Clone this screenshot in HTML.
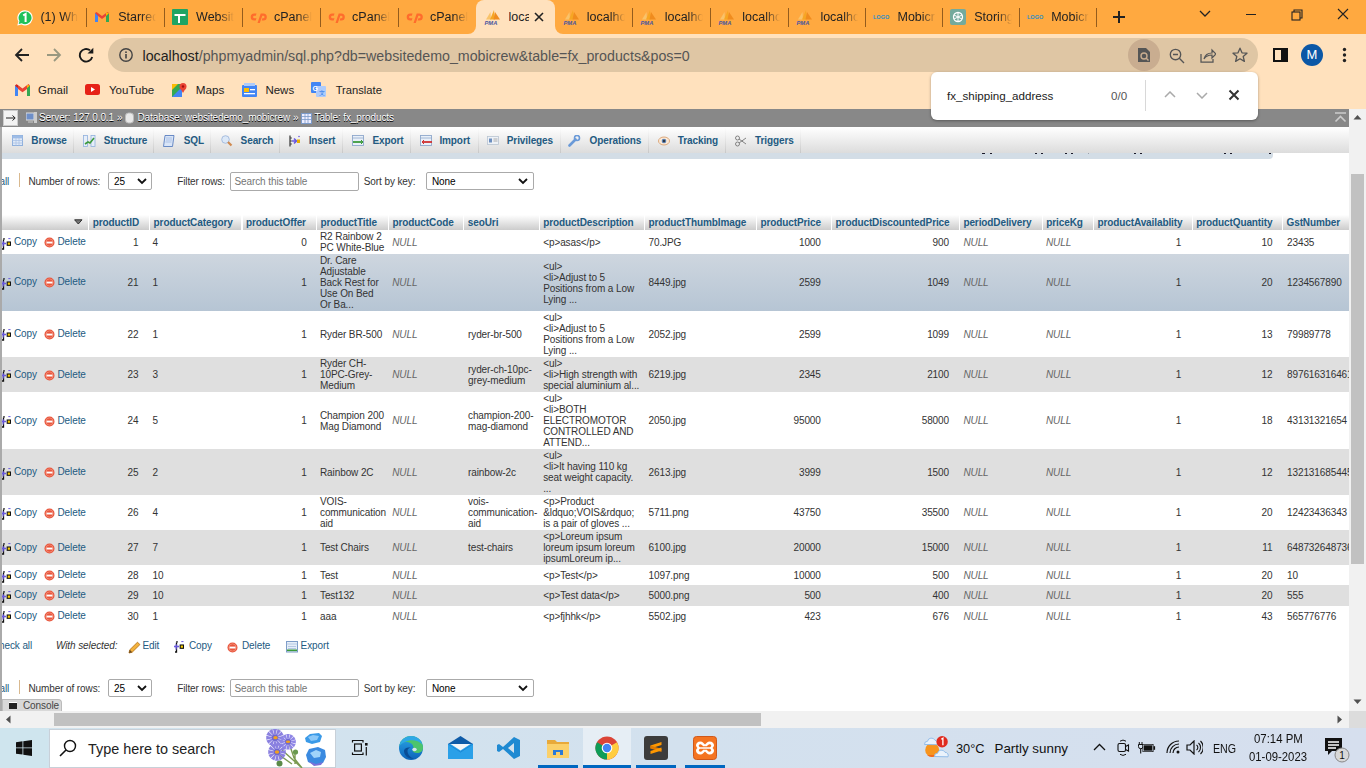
<!DOCTYPE html><html><head><meta charset="utf-8"><style>
*{box-sizing:border-box}
html,body{margin:0;padding:0;width:1366px;height:768px;overflow:hidden;background:#fff;font-family:"Liberation Sans",sans-serif}
.a{position:absolute;white-space:nowrap}
.t{position:absolute;white-space:nowrap;font-size:10px;letter-spacing:-0.1px;line-height:11px;color:#333}
.lnk{color:#235a81}
.nul{color:#666;font-style:italic}
.r{text-align:right}
</style></head><body>

<div class="a" style="left:0;top:0;width:1366px;height:34px;background:#ffa940"></div>
<div class="a" style="left:0;top:34px;width:1366px;height:75px;background:#ffe1bd"></div>
<div class="a" style="left:476px;top:0px;width:79px;height:38px;background:#ffe1bd;border-radius:8px 8px 0 0"></div>
<div class="a" style="left:468px;top:26px;width:8px;height:8px;background:#ffe1bd"></div>
<div class="a" style="left:468px;top:18px;width:8px;height:16px;background:#ffa940;border-radius:0 0 8px 0"></div>
<div class="a" style="left:555px;top:26px;width:8px;height:8px;background:#ffe1bd"></div>
<div class="a" style="left:555px;top:18px;width:8px;height:16px;background:#ffa940;border-radius:0 0 0 8px"></div>
<svg class="a" style="left:15.600000000000001px;top:8.5px" width="18" height="18" viewBox="0 0 18 18"><path d="M9 1.2a7.6 7.6 0 0 0-6.6 11.4L1.3 16.6l4.2-1.1A7.6 7.6 0 1 0 9 1.2z" fill="#fff"/><path d="M9 2.4a6.4 6.4 0 0 0-5.5 9.7l-.8 2.9 3-.8A6.4 6.4 0 1 0 9 2.4z" fill="#1fc15a"/><path d="M7.2 6.3L9.6 4.9V13" fill="none" stroke="#fff" stroke-width="2"/></svg>
<div class="a" style="left:40.4px;top:9px;width:38px;overflow:hidden;font-size:12.5px;line-height:16px;color:#222;-webkit-mask-image:linear-gradient(90deg,#000 62%,transparent 100%)">(1) Wha</div>
<svg class="a" style="left:93.9px;top:9px" width="16" height="16" viewBox="0 0 16 16"><path d="M1 4v9h3V7l4 3 4-3v6h3V4l-1.5-1L8 7 2.5 3z" fill="#ea4335"/><path d="M1 4v9h3V7z" fill="#4285f4"/><path d="M12 7v6h3V4z" fill="#34a853"/><path d="M15 4l-3 3V3.5z" fill="#fbbc04"/></svg>
<div class="a" style="left:118.2px;top:9px;width:38px;overflow:hidden;font-size:12.5px;line-height:16px;color:#222;-webkit-mask-image:linear-gradient(90deg,#000 62%,transparent 100%)">Starred</div>
<svg class="a" style="left:171.8px;top:9px" width="16" height="16" viewBox="0 0 16 16"><rect x="0" y="0" width="16" height="16" rx="1" fill="#1fa463"/><rect x="2.5" y="5" width="11" height="2" fill="#fff"/><rect x="6" y="5" width="2" height="9" fill="#fff"/></svg>
<div class="a" style="left:196.10000000000002px;top:9px;width:38px;overflow:hidden;font-size:12.5px;line-height:16px;color:#222;-webkit-mask-image:linear-gradient(90deg,#000 62%,transparent 100%)">Websit</div>
<svg class="a" style="left:249.7px;top:9px" width="17" height="16" viewBox="0 0 17 16"><path d="M6.5 4.5H4.2a3.5 3.5 0 0 0 0 7h1.5l.8-2.2H4.4a1.3 1.3 0 0 1 0-2.6h1.4z" fill="#ff6c2c"/><path d="M7.5 14l3.2-9.5h2.6a3.5 3.5 0 0 1 0 7h-1.6l.7-2.2h.8a1.3 1.3 0 0 0 0-2.6h-.9L9.8 14z" fill="#ff6c2c"/></svg>
<div class="a" style="left:274.0px;top:9px;width:38px;overflow:hidden;font-size:12.5px;line-height:16px;color:#222;-webkit-mask-image:linear-gradient(90deg,#000 62%,transparent 100%)">cPanel</div>
<svg class="a" style="left:327.8px;top:9px" width="17" height="16" viewBox="0 0 17 16"><path d="M6.5 4.5H4.2a3.5 3.5 0 0 0 0 7h1.5l.8-2.2H4.4a1.3 1.3 0 0 1 0-2.6h1.4z" fill="#ff6c2c"/><path d="M7.5 14l3.2-9.5h2.6a3.5 3.5 0 0 1 0 7h-1.6l.7-2.2h.8a1.3 1.3 0 0 0 0-2.6h-.9L9.8 14z" fill="#ff6c2c"/></svg>
<div class="a" style="left:352.1px;top:9px;width:38px;overflow:hidden;font-size:12.5px;line-height:16px;color:#222;-webkit-mask-image:linear-gradient(90deg,#000 62%,transparent 100%)">cPanel</div>
<svg class="a" style="left:405.7px;top:9px" width="17" height="16" viewBox="0 0 17 16"><path d="M6.5 4.5H4.2a3.5 3.5 0 0 0 0 7h1.5l.8-2.2H4.4a1.3 1.3 0 0 1 0-2.6h1.4z" fill="#ff6c2c"/><path d="M7.5 14l3.2-9.5h2.6a3.5 3.5 0 0 1 0 7h-1.6l.7-2.2h.8a1.3 1.3 0 0 0 0-2.6h-.9L9.8 14z" fill="#ff6c2c"/></svg>
<div class="a" style="left:430.0px;top:9px;width:38px;overflow:hidden;font-size:12.5px;line-height:16px;color:#222;-webkit-mask-image:linear-gradient(90deg,#000 62%,transparent 100%)">cPanel</div>
<svg class="a" style="left:483.5px;top:9px" width="17" height="16" viewBox="0 0 17 16"><path d="M2 10.5L6.5 3 7 10.5z" fill="#f9c36a"/><path d="M6 10.5L10 1l1 9.5z" fill="#f6a623"/><path d="M9.5 10.5L11 3l5 7.5z" fill="#f08c1e"/><text x="0.5" y="15.5" font-size="5.8" font-weight="bold" font-style="italic" fill="#4a55a0" font-family="Liberation Sans">PMA</text></svg>
<div class="a" style="left:508.5px;top:9px;width:20px;overflow:hidden;font-size:12.5px;line-height:16px;color:#222">loca</div>
<svg class="a" style="left:533px;top:11px" width="12" height="12" viewBox="0 0 12 12"><path d="M2 2l8 8M10 2l-8 8" stroke="#222" stroke-width="1.6"/></svg>
<svg class="a" style="left:562.5px;top:9px" width="17" height="16" viewBox="0 0 17 16"><path d="M2 10.5L6.5 3 7 10.5z" fill="#f9c36a"/><path d="M6 10.5L10 1l1 9.5z" fill="#f6a623"/><path d="M9.5 10.5L11 3l5 7.5z" fill="#f08c1e"/><text x="0.5" y="15.5" font-size="5.8" font-weight="bold" font-style="italic" fill="#4a55a0" font-family="Liberation Sans">PMA</text></svg>
<div class="a" style="left:586.8px;top:9px;width:38px;overflow:hidden;font-size:12.5px;line-height:16px;color:#222;-webkit-mask-image:linear-gradient(90deg,#000 62%,transparent 100%)">localho</div>
<svg class="a" style="left:640.4px;top:9px" width="17" height="16" viewBox="0 0 17 16"><path d="M2 10.5L6.5 3 7 10.5z" fill="#f9c36a"/><path d="M6 10.5L10 1l1 9.5z" fill="#f6a623"/><path d="M9.5 10.5L11 3l5 7.5z" fill="#f08c1e"/><text x="0.5" y="15.5" font-size="5.8" font-weight="bold" font-style="italic" fill="#4a55a0" font-family="Liberation Sans">PMA</text></svg>
<div class="a" style="left:664.6999999999999px;top:9px;width:38px;overflow:hidden;font-size:12.5px;line-height:16px;color:#222;-webkit-mask-image:linear-gradient(90deg,#000 62%,transparent 100%)">localho</div>
<svg class="a" style="left:718.0px;top:9px" width="17" height="16" viewBox="0 0 17 16"><path d="M2 10.5L6.5 3 7 10.5z" fill="#f9c36a"/><path d="M6 10.5L10 1l1 9.5z" fill="#f6a623"/><path d="M9.5 10.5L11 3l5 7.5z" fill="#f08c1e"/><text x="0.5" y="15.5" font-size="5.8" font-weight="bold" font-style="italic" fill="#4a55a0" font-family="Liberation Sans">PMA</text></svg>
<div class="a" style="left:742.3px;top:9px;width:38px;overflow:hidden;font-size:12.5px;line-height:16px;color:#222;-webkit-mask-image:linear-gradient(90deg,#000 62%,transparent 100%)">localho</div>
<svg class="a" style="left:796.1px;top:9px" width="17" height="16" viewBox="0 0 17 16"><path d="M2 10.5L6.5 3 7 10.5z" fill="#f9c36a"/><path d="M6 10.5L10 1l1 9.5z" fill="#f6a623"/><path d="M9.5 10.5L11 3l5 7.5z" fill="#f08c1e"/><text x="0.5" y="15.5" font-size="5.8" font-weight="bold" font-style="italic" fill="#4a55a0" font-family="Liberation Sans">PMA</text></svg>
<div class="a" style="left:820.4px;top:9px;width:38px;overflow:hidden;font-size:12.5px;line-height:16px;color:#222;-webkit-mask-image:linear-gradient(90deg,#000 62%,transparent 100%)">localho</div>
<svg class="a" style="left:873.2px;top:9px" width="17" height="16" viewBox="0 0 17 16"><text x="0" y="10" font-size="5.5" font-weight="bold" fill="#2a8ec9" font-family="Liberation Sans">LOGO</text></svg>
<div class="a" style="left:897.5px;top:9px;width:38px;overflow:hidden;font-size:12.5px;line-height:16px;color:#222;-webkit-mask-image:linear-gradient(90deg,#000 62%,transparent 100%)">Mobicr</div>
<svg class="a" style="left:949.9px;top:9px" width="16" height="16" viewBox="0 0 16 16"><rect width="16" height="16" rx="2" fill="#74aa9c"/><circle cx="8" cy="8" r="4.5" fill="none" stroke="#fff" stroke-width="1.3"/><path d="M8 3.5v9M4 6l8 4M4 10l8-4" stroke="#fff" stroke-width="1"/></svg>
<div class="a" style="left:974.1999999999999px;top:9px;width:38px;overflow:hidden;font-size:12.5px;line-height:16px;color:#222;-webkit-mask-image:linear-gradient(90deg,#000 62%,transparent 100%)">Storing</div>
<svg class="a" style="left:1026.9px;top:9px" width="17" height="16" viewBox="0 0 17 16"><text x="0" y="10" font-size="5.5" font-weight="bold" fill="#2a8ec9" font-family="Liberation Sans">LOGO</text></svg>
<div class="a" style="left:1051.2px;top:9px;width:38px;overflow:hidden;font-size:12.5px;line-height:16px;color:#222;-webkit-mask-image:linear-gradient(90deg,#000 62%,transparent 100%)">Mobicr</div>
<div class="a" style="left:85.9px;top:8px;width:1px;height:19px;background:rgba(60,30,0,.55)"></div>
<div class="a" style="left:163.8px;top:8px;width:1px;height:19px;background:rgba(60,30,0,.55)"></div>
<div class="a" style="left:241.7px;top:8px;width:1px;height:19px;background:rgba(60,30,0,.55)"></div>
<div class="a" style="left:319.8px;top:8px;width:1px;height:19px;background:rgba(60,30,0,.55)"></div>
<div class="a" style="left:397.7px;top:8px;width:1px;height:19px;background:rgba(60,30,0,.55)"></div>
<div class="a" style="left:632.4px;top:8px;width:1px;height:19px;background:rgba(60,30,0,.55)"></div>
<div class="a" style="left:710.0px;top:8px;width:1px;height:19px;background:rgba(60,30,0,.55)"></div>
<div class="a" style="left:788.1px;top:8px;width:1px;height:19px;background:rgba(60,30,0,.55)"></div>
<div class="a" style="left:865.2px;top:8px;width:1px;height:19px;background:rgba(60,30,0,.55)"></div>
<div class="a" style="left:941.9px;top:8px;width:1px;height:19px;background:rgba(60,30,0,.55)"></div>
<div class="a" style="left:1018.9px;top:8px;width:1px;height:19px;background:rgba(60,30,0,.55)"></div>
<div class="a" style="left:1096.1px;top:8px;width:1px;height:19px;background:rgba(60,30,0,.55)"></div>
<svg class="a" style="left:1112px;top:10px" width="14" height="14" viewBox="0 0 14 14"><path d="M7 1v12M1 7h12" stroke="#222" stroke-width="2"/></svg>
<svg class="a" style="left:1199px;top:10px" width="12" height="8" viewBox="0 0 12 8"><path d="M1 1l5 5 5-5" fill="none" stroke="#222" stroke-width="1.3"/></svg>
<div class="a" style="left:1246px;top:14px;width:10px;height:1px;background:#222"></div>
<svg class="a" style="left:1291px;top:9px" width="12" height="12" viewBox="0 0 12 12"><path d="M3 3V1h8v8H9" fill="none" stroke="#222" stroke-width="1.1"/><rect x="1" y="3" width="8" height="8" fill="none" stroke="#222" stroke-width="1.1"/></svg>
<svg class="a" style="left:1337px;top:8px" width="12" height="12" viewBox="0 0 12 12"><path d="M1 1l10 10M11 1L1 11" stroke="#222" stroke-width="1.1"/></svg>
<svg class="a" style="left:14px;top:48px" width="16" height="14" viewBox="0 0 16 14"><path d="M15 7H2M8 1L2 7l6 6" fill="none" stroke="#222" stroke-width="1.8"/></svg>
<svg class="a" style="left:46.2px;top:48px" width="16" height="14" viewBox="0 0 16 14"><path d="M1 7h13M8 1l6 6-6 6" fill="none" stroke="#999880" stroke-width="1.8"/></svg>
<svg class="a" style="left:78px;top:47px" width="16" height="16" viewBox="0 0 16 16"><path d="M14.2 10A6.3 6.3 0 1 1 12 3.3" fill="none" stroke="#1a1a1a" stroke-width="1.9"/><path d="M15.3 0.8V6.6H9.5z" fill="#1a1a1a"/></svg>
<div class="a" style="left:108px;top:38px;width:1150px;height:34px;border-radius:17px;background:#dfc6a4"></div>
<svg class="a" style="left:119px;top:48px" width="14" height="14" viewBox="0 0 14 14"><circle cx="7" cy="7" r="6.2" fill="none" stroke="#444" stroke-width="1.4"/><rect x="6.2" y="6" width="1.6" height="4.5" fill="#444"/><rect x="6.2" y="3.4" width="1.6" height="1.6" fill="#444"/></svg>
<div class="a" style="left:142.5px;top:46.8px;font-size:14.24px;line-height:18px;color:#555"><span style="color:#1d1d1d">localhost</span>/phpmyadmin/sql.php?db=websitedemo_mobicrew&amp;table=fx_products&amp;pos=0</div>
<div class="a" style="left:1128px;top:39px;width:32px;height:32px;border-radius:16px;background:#c9ad90"></div>
<svg class="a" style="left:1137px;top:47px" width="14" height="16" viewBox="0 0 14 16"><path d="M1 1h8l4 4v10H1z" fill="#555"/><circle cx="7" cy="9" r="3" fill="none" stroke="#c9ad90" stroke-width="1.4"/><path d="M9 11l2.5 2.5" stroke="#c9ad90" stroke-width="1.4"/></svg>
<svg class="a" style="left:1169px;top:48px" width="16" height="16" viewBox="0 0 16 16"><circle cx="6.5" cy="6.5" r="5.2" fill="none" stroke="#555" stroke-width="1.35"/><path d="M4 6.5h5M10.3 10.3L15 15" stroke="#555" stroke-width="1.35"/></svg>
<svg class="a" style="left:1200px;top:48px" width="16" height="15" viewBox="0 0 16 15"><path d="M1 6v8h12v-3" fill="none" stroke="#555" stroke-width="1.25"/><path d="M4 11c1-4 4-6 8-6V2l4 4-4 4V7c-3 0-6 1-8 4z" fill="none" stroke="#555" stroke-width="1.2"/></svg>
<svg class="a" style="left:1232px;top:47px" width="16" height="16" viewBox="0 0 16 16"><path d="M8 1.2l2 4.6 5 .4-3.8 3.3 1.2 4.9L8 11.8l-4.4 2.6 1.2-4.9L1 6.2l5-.4z" fill="none" stroke="#555" stroke-width="1.3" stroke-linejoin="round"/></svg>
<svg class="a" style="left:1273px;top:48px" width="15" height="14" viewBox="0 0 15 14"><rect x="1" y="1" width="13" height="12" fill="none" stroke="#111" stroke-width="2"/><rect x="8" y="1" width="6" height="12" fill="#111"/></svg>
<div class="a" style="left:1301px;top:44px;width:22px;height:22px;border-radius:11px;background:#0b57a6;color:#fff;font-size:13px;line-height:22px;text-align:center">M</div>
<svg class="a" style="left:1342px;top:47px" width="5" height="16" viewBox="0 0 5 16"><circle cx="2.5" cy="2.5" r="1.7" fill="#222"/><circle cx="2.5" cy="8" r="1.7" fill="#222"/><circle cx="2.5" cy="13.5" r="1.7" fill="#222"/></svg>
<svg class="a" style="left:15px;top:84px" width="15" height="12" viewBox="0 0 15 12"><path d="M0 1.5v10.5h3V5l4.5 3.3L12 5v7h3V1.5L13.5 0 7.5 4.5 1.5 0z" fill="#ea4335"/><path d="M0 1.5V12h3V4z" fill="#4285f4"/><path d="M12 4v8h3V1.5z" fill="#34a853"/><path d="M15 1.5L12 4V1z" fill="#fbbc04"/><path d="M0 1.5L3 4V1z" fill="#c5221f"/></svg>
<div class="a" style="left:38px;top:82px;font-size:11.5px;line-height:16px;color:#1d1d1d">Gmail</div>
<svg class="a" style="left:85px;top:84px" width="15" height="11" viewBox="0 0 15 11"><rect width="15" height="11" rx="2.5" fill="#e62117"/><path d="M6 3l4 2.5L6 8z" fill="#fff"/></svg>
<div class="a" style="left:109px;top:82px;font-size:11.5px;line-height:16px;color:#1d1d1d">YouTube</div>
<svg class="a" style="left:172px;top:82px" width="15" height="15" viewBox="0 0 15 15"><path d="M0 2h10v13H0z" fill="#34a853"/><path d="M0 15L10 5v10z" fill="#4285f4"/><path d="M0 2h6L0 8z" fill="#fbbc04"/><circle cx="11" cy="4.5" r="3.5" fill="#ea4335"/><path d="M8.5 6.5L11 11l2.5-4.5z" fill="#ea4335"/><circle cx="11" cy="4.5" r="1.2" fill="#a50e0e"/></svg>
<div class="a" style="left:195.7px;top:82px;font-size:11.7px;line-height:16px;color:#1d1d1d">Maps</div>
<svg class="a" style="left:242px;top:83px" width="15" height="14" viewBox="0 0 15 14"><rect x="0" y="2" width="15" height="12" rx="1" fill="#4285f4"/><rect x="2" y="0" width="11" height="3" fill="#aecbfa"/><rect x="2" y="5" width="5" height="4" fill="#fbbc04"/><rect x="8" y="6" width="5" height="1.3" fill="#fff"/><rect x="2" y="10" width="11" height="1.3" fill="#fff"/></svg>
<div class="a" style="left:265.4px;top:82px;font-size:11.5px;line-height:16px;color:#1d1d1d">News</div>
<svg class="a" style="left:311px;top:82px" width="15" height="15" viewBox="0 0 15 15"><rect x="0" y="0" width="10" height="11" rx="1" fill="#4285f4"/><rect x="5" y="4" width="10" height="11" rx="1" fill="#aecbfa"/><text x="1.5" y="8.5" font-size="7" font-weight="bold" fill="#fff" font-family="Liberation Sans">G</text><text x="8" y="13" font-size="6" fill="#1a73e8" font-family="Liberation Sans">文</text></svg>
<div class="a" style="left:335.7px;top:82px;font-size:11.2px;line-height:16px;color:#1d1d1d">Translate</div>
<div class="a" style="left:0;top:109px;width:1349px;height:602px;background:#fff;overflow:hidden">
<div class="a" style="left:0;top:0;width:1349px;height:18px;background:#888"></div>
<div class="a" style="left:3px;top:1px;width:15px;height:16px;background:#f3f3f3;border:1px solid #ccc"></div>
<svg class="a" style="left:6px;top:6px" width="10" height="6" viewBox="0 0 10 6"><path d="M0 3h9M6.5 0.5L9.2 3 6.5 5.5" fill="none" stroke="#222" stroke-width="1"/></svg>
<svg class="a" style="left:26px;top:3px" width="11" height="12" viewBox="0 0 11 12"><rect x="0" y="1" width="8" height="7" fill="#6e8fc9" stroke="#ddd" stroke-width="1"/><rect x="8" y="0" width="3" height="11" fill="#ccc"/><rect x="2" y="9" width="5" height="2" fill="#aaa"/></svg>
<div class="a" style="left:39px;top:3px;font-size:10px;letter-spacing:-0.1px;line-height:11px;color:#fff;text-shadow:0 1px 0 #000">Server: 127.0.0.1</div>
<div class="a" style="left:117px;top:3px;font-size:10px;letter-spacing:-0.1px;line-height:11px;color:#fff;text-shadow:0 1px 0 #000">&raquo;</div>
<svg class="a" style="left:125px;top:3px" width="9" height="12" viewBox="0 0 9 12"><rect x="0.5" y="1" width="8" height="10" rx="3" fill="#e8e8e8" stroke="#bbb"/></svg>
<div class="a" style="left:137.5px;top:3px;font-size:10px;letter-spacing:-0.1px;line-height:11px;color:#fff;text-shadow:0 1px 0 #000">Database: websitedemo_mobicrew</div>
<div class="a" style="left:293px;top:3px;font-size:10px;letter-spacing:-0.1px;line-height:11px;color:#fff;text-shadow:0 1px 0 #000">&raquo;</div>
<svg class="a" style="left:301px;top:3px" width="11" height="12" viewBox="0 0 11 12"><rect x="0.5" y="1.5" width="10" height="10" fill="#eef" stroke="#7b9ac9"/><path d="M1 4.5h9M1 7.5h9M4 1.5v10M7 1.5v10" stroke="#7b9ac9" stroke-width="0.8"/></svg>
<div class="a" style="left:314.5px;top:3px;font-size:10px;letter-spacing:-0.1px;line-height:11px;color:#fff;text-shadow:0 1px 0 #000">Table: fx_products</div>
<svg class="a" style="left:1334px;top:3px" width="13" height="11" viewBox="0 0 13 11"><path d="M1 1h11" stroke="#ccc" stroke-width="1.5"/><path d="M1.5 9.5L6.5 4.5l5 5" fill="none" stroke="#ccc" stroke-width="1.6"/></svg>
<div class="a" style="left:2px;top:18px;width:1347px;height:26px;background:linear-gradient(#ffffff,#dcdcdc)"></div>
<div class="a" style="left:73px;top:18px;width:1px;height:26px;background:linear-gradient(#fff,#c8c8c8)"></div>
<div class="a" style="left:152.5px;top:18px;width:1px;height:26px;background:linear-gradient(#fff,#c8c8c8)"></div>
<div class="a" style="left:210px;top:18px;width:1px;height:26px;background:linear-gradient(#fff,#c8c8c8)"></div>
<div class="a" style="left:279px;top:18px;width:1px;height:26px;background:linear-gradient(#fff,#c8c8c8)"></div>
<div class="a" style="left:342px;top:18px;width:1px;height:26px;background:linear-gradient(#fff,#c8c8c8)"></div>
<div class="a" style="left:410px;top:18px;width:1px;height:26px;background:linear-gradient(#fff,#c8c8c8)"></div>
<div class="a" style="left:477.5px;top:18px;width:1px;height:26px;background:linear-gradient(#fff,#c8c8c8)"></div>
<div class="a" style="left:560px;top:18px;width:1px;height:26px;background:linear-gradient(#fff,#c8c8c8)"></div>
<div class="a" style="left:648px;top:18px;width:1px;height:26px;background:linear-gradient(#fff,#c8c8c8)"></div>
<div class="a" style="left:725px;top:18px;width:1px;height:26px;background:linear-gradient(#fff,#c8c8c8)"></div>
<div class="a" style="left:800px;top:18px;width:1px;height:26px;background:linear-gradient(#fff,#c8c8c8)"></div>
<div class="a" style="left:31.3px;top:26px;font-size:10px;letter-spacing:-0.1px;line-height:11px;font-weight:bold;color:#235a81">Browse</div>
<svg class="a" style="left:11.5px;top:25.5px" width="13" height="12" viewBox="0 0 13 12"><rect x="0.5" y="0.5" width="10" height="10" fill="#dfe9f7" stroke="#8fb0dc"/><path d="M0.5 3h10M0.5 5.5h10M0.5 8h10M4 3v7.5M7 3v7.5" stroke="#a9c2e6" stroke-width="0.8"/><rect x="0.5" y="0.5" width="10" height="2.5" fill="#9dbce6"/></svg>
<div class="a" style="left:103.7px;top:26px;font-size:10px;letter-spacing:-0.1px;line-height:11px;font-weight:bold;color:#235a81">Structure</div>
<svg class="a" style="left:82.5px;top:25.5px" width="13" height="12" viewBox="0 0 13 12"><rect x="0.5" y="0.5" width="4" height="11" fill="#e6eef9" stroke="#8fb0dc" stroke-width="0.8"/><rect x="8" y="0.5" width="4" height="11" fill="#e6eef9" stroke="#8fb0dc" stroke-width="0.8"/><path d="M2 9l3-2 2 1 4-5" fill="none" stroke="#3c9a3c" stroke-width="1.6"/></svg>
<div class="a" style="left:183.7px;top:26px;font-size:10px;letter-spacing:-0.1px;line-height:11px;font-weight:bold;color:#235a81">SQL</div>
<svg class="a" style="left:163px;top:25.5px" width="13" height="12" viewBox="0 0 13 12"><path d="M2 0.5h9l-1.5 11h-9z" fill="#d9e5f7" stroke="#5a7fc0" stroke-width="0.9"/><path d="M3 3h6M3 5h6M2.5 7h6" stroke="#9ab3de" stroke-width="0.7"/></svg>
<div class="a" style="left:240.6px;top:26px;font-size:10px;letter-spacing:-0.1px;line-height:11px;font-weight:bold;color:#235a81">Search</div>
<svg class="a" style="left:221px;top:25.5px" width="13" height="12" viewBox="0 0 13 12"><circle cx="4.5" cy="4.5" r="3.8" fill="#dce8f7" stroke="#9fb8dc" stroke-width="0.9"/><path d="M7 7l3.5 3.5" stroke="#d08a50" stroke-width="2.2"/></svg>
<div class="a" style="left:308.7px;top:26px;font-size:10px;letter-spacing:-0.1px;line-height:11px;font-weight:bold;color:#235a81">Insert</div>
<svg class="a" style="left:289px;top:25.5px" width="13" height="12" viewBox="0 0 13 12"><path d="M1 0.5v11" stroke="#333" stroke-width="1.2"/><path d="M1 3h2M1 6h2M1 9h2" stroke="#333" stroke-width="0.8"/><path d="M3 6h4M5 3.5l2.5 2.5L5 8.5" fill="none" stroke="#6a5ae0" stroke-width="1.6"/><rect x="8" y="4.5" width="3" height="3.5" fill="#e8b000"/><circle cx="10" cy="1.5" r="0.8" fill="#6a5ae0"/></svg>
<div class="a" style="left:372.4px;top:26px;font-size:10px;letter-spacing:-0.1px;line-height:11px;font-weight:bold;color:#235a81">Export</div>
<svg class="a" style="left:351.5px;top:25.5px" width="13" height="12" viewBox="0 0 13 12"><rect x="0.5" y="0.5" width="11" height="10" fill="#e9f0f9" stroke="#8fa8cc" stroke-width="0.9"/><path d="M0.5 3h11" stroke="#8fa8cc" stroke-width="0.8"/><path d="M1 7h10" stroke="#3b9a3b" stroke-width="1.8"/><path d="M9 5l2 2-2 2" fill="none" stroke="#3b9a3b" stroke-width="1"/></svg>
<div class="a" style="left:439.4px;top:26px;font-size:10px;letter-spacing:-0.1px;line-height:11px;font-weight:bold;color:#235a81">Import</div>
<svg class="a" style="left:419.5px;top:25.5px" width="13" height="12" viewBox="0 0 13 12"><rect x="0.5" y="0.5" width="11" height="10" fill="#e9f0f9" stroke="#8fa8cc" stroke-width="0.9"/><path d="M0.5 3h11" stroke="#8fa8cc" stroke-width="0.8"/><path d="M2 7h10" stroke="#d03030" stroke-width="1.8"/><path d="M4 5L2 7l2 2" fill="none" stroke="#d03030" stroke-width="1"/></svg>
<div class="a" style="left:506.8px;top:26px;font-size:10px;letter-spacing:-0.1px;line-height:11px;font-weight:bold;color:#235a81">Privileges</div>
<svg class="a" style="left:487px;top:25.5px" width="13" height="12" viewBox="0 0 13 12"><rect x="0.5" y="1.5" width="11" height="8" fill="#eef2f7" stroke="#b8c4d2" stroke-width="0.8"/><rect x="2" y="3.5" width="3" height="4" fill="#6d8fc0"/><path d="M6.5 4h4M6.5 6h4" stroke="#999" stroke-width="0.8"/></svg>
<div class="a" style="left:589.5px;top:26px;font-size:10px;letter-spacing:-0.1px;line-height:11px;font-weight:bold;color:#235a81">Operations</div>
<svg class="a" style="left:568px;top:25.5px" width="13" height="12" viewBox="0 0 13 12"><path d="M1.5 10.5l6-6" stroke="#6a9ad8" stroke-width="2.6" stroke-linecap="round"/><circle cx="9" cy="3" r="2.5" fill="none" stroke="#6a9ad8" stroke-width="1.6"/></svg>
<div class="a" style="left:677.8px;top:26px;font-size:10px;letter-spacing:-0.1px;line-height:11px;font-weight:bold;color:#235a81">Tracking</div>
<svg class="a" style="left:658px;top:25.5px" width="13" height="12" viewBox="0 0 13 12"><ellipse cx="6" cy="6" rx="5.5" ry="4" fill="#fbe9d6" stroke="#d9a070" stroke-width="0.9"/><circle cx="6" cy="6" r="2.3" fill="#5a7fb0"/><circle cx="6" cy="6" r="1" fill="#222"/></svg>
<div class="a" style="left:755px;top:26px;font-size:10px;letter-spacing:-0.1px;line-height:11px;font-weight:bold;color:#235a81">Triggers</div>
<svg class="a" style="left:735px;top:25.5px" width="13" height="12" viewBox="0 0 13 12"><circle cx="2.5" cy="3" r="2" fill="none" stroke="#777" stroke-width="0.9"/><circle cx="2.5" cy="9" r="2" fill="none" stroke="#777" stroke-width="0.9"/><path d="M4 4l7 5M4 8l7-5" stroke="#777" stroke-width="0.9"/></svg>
<div class="a" style="left:2px;top:44px;width:1271px;height:6px;background:#d3dde6;border-radius:0 0 4px 0"></div>
<div class="a" style="left:981.5px;top:44px;width:3.5px;height:1.2px;background:#1a1a2a;opacity:1"></div>
<div class="a" style="left:989.5px;top:44px;width:2px;height:1.2px;background:#1a1a2a;opacity:1"></div>
<div class="a" style="left:1034.5px;top:44px;width:2px;height:1.2px;background:#1a1a2a;opacity:1"></div>
<div class="a" style="left:1040.5px;top:44px;width:2px;height:1.2px;background:#1a1a2a;opacity:1"></div>
<div class="a" style="left:1064.5px;top:44px;width:2px;height:1.2px;background:#1a1a2a;opacity:1"></div>
<div class="a" style="left:1070.5px;top:44px;width:2px;height:1.2px;background:#1a1a2a;opacity:1"></div>
<div class="a" style="left:1087.5px;top:44px;width:1.5px;height:1.2px;background:#1a1a2a;opacity:0.3"></div>
<div class="a" style="left:1133.5px;top:44px;width:2px;height:1.2px;background:#1a1a2a;opacity:1"></div>
<div class="a" style="left:1139.5px;top:44px;width:2px;height:1.2px;background:#1a1a2a;opacity:1"></div>
<div class="a" style="left:1223.5px;top:44px;width:2px;height:1.2px;background:#1a1a2a;opacity:1"></div>
<div class="a" style="left:1229.5px;top:44px;width:2px;height:1.2px;background:#1a1a2a;opacity:1"></div>
<div class="a" style="left:1268.5px;top:44px;width:2px;height:1.2px;background:#1a1a2a;opacity:1"></div>
<div class="t lnk" style="left:-0.5px;top:67px">all</div>
<div class="a" style="left:19px;top:64px;width:1px;height:14px;background:#d9b98f"></div>
<div class="t" style="left:28.4px;top:67px;color:#333">Number of rows:</div>
<div class="a" style="left:108px;top:63px;width:44px;height:18px;border:1px solid #aaa;border-radius:2px;background:#fff"></div>
<div class="t" style="left:114px;top:67px;color:#000">25</div>
<svg class="a" style="left:137px;top:69px" width="10" height="7" viewBox="0 0 10 7"><path d="M1 1l4 4 4-4" fill="none" stroke="#111" stroke-width="1.8"/></svg>
<div class="t" style="left:177.2px;top:67px;color:#333">Filter rows:</div>
<div class="a" style="left:230px;top:63px;width:128.5px;height:18.5px;border:1px solid #aaa;border-radius:2px;background:#fff"></div>
<div class="t" style="left:234.5px;top:67px;color:#757575">Search this table</div>
<div class="t" style="left:363.8px;top:67px;color:#333">Sort by key:</div>
<div class="a" style="left:426px;top:63px;width:107.5px;height:18px;border:1px solid #aaa;border-radius:2px;background:#fff"></div>
<div class="t" style="left:432px;top:67px;color:#000">None</div>
<svg class="a" style="left:518px;top:69px" width="10" height="7" viewBox="0 0 10 7"><path d="M1 1l4 4 4-4" fill="none" stroke="#111" stroke-width="1.8"/></svg>
<div class="a" style="left:2px;top:105.5px;width:86px;height:15.5px;background:linear-gradient(#fff,#ccc)"></div>
<svg class="a" style="left:73.5px;top:110.30000000000001px" width="9" height="6" viewBox="0 0 9 6"><path d="M0.6 0.8h7.4L4.3 5z" fill="#777" stroke="#222" stroke-width="0.9" stroke-linejoin="round"/></svg>
<div class="a" style="left:89.2px;top:105.5px;width:59.89999999999999px;height:15.5px;background:linear-gradient(#fff,#ccc)"></div>
<div class="t" style="left:92.7px;top:108px;font-weight:bold;color:#235a81">productID</div>
<div class="a" style="left:150.1px;top:105.5px;width:91.4px;height:15.5px;background:linear-gradient(#fff,#ccc)"></div>
<div class="t" style="left:153.6px;top:108px;font-weight:bold;color:#235a81">productCategory</div>
<div class="a" style="left:242.5px;top:105.5px;width:73.5px;height:15.5px;background:linear-gradient(#fff,#ccc)"></div>
<div class="t" style="left:246px;top:108px;font-weight:bold;color:#235a81">productOffer</div>
<div class="a" style="left:317.0px;top:105.5px;width:71.0px;height:15.5px;background:linear-gradient(#fff,#ccc)"></div>
<div class="t" style="left:320.5px;top:108px;font-weight:bold;color:#235a81">productTitle</div>
<div class="a" style="left:389.0px;top:105.5px;width:74.30000000000001px;height:15.5px;background:linear-gradient(#fff,#ccc)"></div>
<div class="t" style="left:392.5px;top:108px;font-weight:bold;color:#235a81">productCode</div>
<div class="a" style="left:464.3px;top:105.5px;width:74.40000000000003px;height:15.5px;background:linear-gradient(#fff,#ccc)"></div>
<div class="t" style="left:467.8px;top:108px;font-weight:bold;color:#235a81">seoUri</div>
<div class="a" style="left:539.7px;top:105.5px;width:104.29999999999995px;height:15.5px;background:linear-gradient(#fff,#ccc)"></div>
<div class="t" style="left:543.2px;top:108px;font-weight:bold;color:#235a81">productDescription</div>
<div class="a" style="left:645.0px;top:105.5px;width:110.89999999999998px;height:15.5px;background:linear-gradient(#fff,#ccc)"></div>
<div class="t" style="left:648.5px;top:108px;font-weight:bold;color:#235a81">productThumbImage</div>
<div class="a" style="left:756.9px;top:105.5px;width:74.20000000000005px;height:15.5px;background:linear-gradient(#fff,#ccc)"></div>
<div class="t" style="left:760.4px;top:108px;font-weight:bold;color:#235a81">productPrice</div>
<div class="a" style="left:832.1px;top:105.5px;width:126.79999999999995px;height:15.5px;background:linear-gradient(#fff,#ccc)"></div>
<div class="t" style="left:835.6px;top:108px;font-weight:bold;color:#235a81">productDiscountedPrice</div>
<div class="a" style="left:959.9px;top:105.5px;width:81.89999999999998px;height:15.5px;background:linear-gradient(#fff,#ccc)"></div>
<div class="t" style="left:963.4px;top:108px;font-weight:bold;color:#235a81">periodDelivery</div>
<div class="a" style="left:1042.8px;top:105.5px;width:50.100000000000136px;height:15.5px;background:linear-gradient(#fff,#ccc)"></div>
<div class="t" style="left:1046.3px;top:108px;font-weight:bold;color:#235a81">priceKg</div>
<div class="a" style="left:1093.9px;top:105.5px;width:97.79999999999995px;height:15.5px;background:linear-gradient(#fff,#ccc)"></div>
<div class="t" style="left:1097.4px;top:108px;font-weight:bold;color:#235a81">productAvailablity</div>
<div class="a" style="left:1192.7px;top:105.5px;width:89.29999999999995px;height:15.5px;background:linear-gradient(#fff,#ccc)"></div>
<div class="t" style="left:1196.2px;top:108px;font-weight:bold;color:#235a81">productQuantity</div>
<div class="a" style="left:1283.0px;top:105.5px;width:116.5px;height:15.5px;background:linear-gradient(#fff,#ccc)"></div>
<div class="t" style="left:1286.5px;top:108px;font-weight:bold;color:#235a81">GstNumber</div>
<div class="a" style="left:2px;top:121px;width:1347px;height:24px;background:#fff"></div>
<svg class="a" style="left:0.5px;top:128.5px" width="10" height="12" viewBox="0 0 10 12"><path d="M2.5 1.5v9.5H1" fill="none" stroke="#111" stroke-width="1.3"/><circle cx="3" cy="0.9" r="0.8" fill="#111"/><path d="M0 5.5h5" stroke="#6a5ae0" stroke-width="1.6"/><path d="M2.2 3.2v5.2" stroke="#6a5ae0" stroke-width="1.2"/><rect x="6.2" y="4" width="3.3" height="3.3" fill="#ffd200" stroke="#111" stroke-width="1.1"/><path d="M7.3 0.6h2.2" stroke="#6a5ae0" stroke-width="1"/></svg>
<div class="t lnk" style="left:14px;top:127.0px">Copy</div>
<svg class="a" style="left:44px;top:128.0px" width="11" height="11" viewBox="0 0 11 11"><circle cx="5.5" cy="5.5" r="5" fill="#e8553c"/><circle cx="5.5" cy="5.5" r="3.6" fill="none" stroke="#f6a08a" stroke-width="0.9" opacity=".7"/><rect x="2.5" y="4.6" width="6" height="1.9" fill="#fff"/></svg>
<div class="t lnk" style="left:57.5px;top:127.0px">Delete</div>
<div class="t r" style="left:-0.4000000000000057px;width:138.9px;top:127.9px">1</div>
<div class="t" style="left:152.6px;top:127.9px">4</div>
<div class="t r" style="left:166.5px;width:140.2px;top:127.9px">0</div>
<div class="t" style="left:320px;top:122.30000000000001px">R2 Rainbow 2<br>PC White-Blue</div>
<div class="t nul" style="left:392.2px;top:127.80000000000001px">NULL</div>
<div class="t" style="left:543.2px;top:127.9px">&lt;p&gt;asas&lt;/p&gt;</div>
<div class="t" style="left:648.5px;top:127.9px">70.JPG</div>
<div class="t r" style="left:681.6px;width:139.19999999999993px;top:127.9px">1000</div>
<div class="t r" style="left:809.4px;width:139.60000000000002px;top:127.9px">900</div>
<div class="t nul" style="left:963.4px;top:127.80000000000001px">NULL</div>
<div class="t nul" style="left:1046px;top:127.80000000000001px">NULL</div>
<div class="t r" style="left:1042.2px;width:139.0px;top:127.9px">1</div>
<div class="t r" style="left:1132.5px;width:139.9000000000001px;top:127.9px">10</div>
<div class="t" style="left:1287px;width:62px;overflow:hidden;top:127.9px">23435</div>
<div class="a" style="left:2px;top:145px;width:1347px;height:56.5px;background:linear-gradient(#ced6df,#b6c5d4)"></div>
<svg class="a" style="left:0.5px;top:168.75px" width="10" height="12" viewBox="0 0 10 12"><path d="M2.5 1.5v9.5H1" fill="none" stroke="#111" stroke-width="1.3"/><circle cx="3" cy="0.9" r="0.8" fill="#111"/><path d="M0 5.5h5" stroke="#6a5ae0" stroke-width="1.6"/><path d="M2.2 3.2v5.2" stroke="#6a5ae0" stroke-width="1.2"/><rect x="6.2" y="4" width="3.3" height="3.3" fill="#ffd200" stroke="#111" stroke-width="1.1"/><path d="M7.3 0.6h2.2" stroke="#6a5ae0" stroke-width="1"/></svg>
<div class="t lnk" style="left:14px;top:167.25px">Copy</div>
<svg class="a" style="left:44px;top:168.25px" width="11" height="11" viewBox="0 0 11 11"><circle cx="5.5" cy="5.5" r="5" fill="#e8553c"/><circle cx="5.5" cy="5.5" r="3.6" fill="none" stroke="#f6a08a" stroke-width="0.9" opacity=".7"/><rect x="2.5" y="4.6" width="6" height="1.9" fill="#fff"/></svg>
<div class="t lnk" style="left:57.5px;top:167.25px">Delete</div>
<div class="t r" style="left:-0.4000000000000057px;width:138.9px;top:168.14999999999998px">21</div>
<div class="t" style="left:152.6px;top:168.14999999999998px">1</div>
<div class="t r" style="left:166.5px;width:140.2px;top:168.14999999999998px">1</div>
<div class="t" style="left:320px;top:146.05px">Dr. Care<br>Adjustable<br>Back Rest for<br>Use On Bed<br>Or Ba...</div>
<div class="t nul" style="left:392.2px;top:168.05px">NULL</div>
<div class="t" style="left:543.2px;top:151.55px">&lt;ul&gt;<br>&lt;li&gt;Adjust to 5<br>Positions from a Low<br>Lying ...</div>
<div class="t" style="left:648.5px;top:168.14999999999998px">8449.jpg</div>
<div class="t r" style="left:681.6px;width:139.19999999999993px;top:168.14999999999998px">2599</div>
<div class="t r" style="left:809.4px;width:139.60000000000002px;top:168.14999999999998px">1049</div>
<div class="t nul" style="left:963.4px;top:168.05px">NULL</div>
<div class="t nul" style="left:1046px;top:168.05px">NULL</div>
<div class="t r" style="left:1042.2px;width:139.0px;top:168.14999999999998px">1</div>
<div class="t r" style="left:1132.5px;width:139.9000000000001px;top:168.14999999999998px">20</div>
<div class="t" style="left:1287px;width:62px;overflow:hidden;top:168.14999999999998px">1234567890</div>
<div class="a" style="left:2px;top:201.5px;width:1347px;height:46.5px;background:#fff"></div>
<svg class="a" style="left:0.5px;top:220.25px" width="10" height="12" viewBox="0 0 10 12"><path d="M2.5 1.5v9.5H1" fill="none" stroke="#111" stroke-width="1.3"/><circle cx="3" cy="0.9" r="0.8" fill="#111"/><path d="M0 5.5h5" stroke="#6a5ae0" stroke-width="1.6"/><path d="M2.2 3.2v5.2" stroke="#6a5ae0" stroke-width="1.2"/><rect x="6.2" y="4" width="3.3" height="3.3" fill="#ffd200" stroke="#111" stroke-width="1.1"/><path d="M7.3 0.6h2.2" stroke="#6a5ae0" stroke-width="1"/></svg>
<div class="t lnk" style="left:14px;top:218.75px">Copy</div>
<svg class="a" style="left:44px;top:219.75px" width="11" height="11" viewBox="0 0 11 11"><circle cx="5.5" cy="5.5" r="5" fill="#e8553c"/><circle cx="5.5" cy="5.5" r="3.6" fill="none" stroke="#f6a08a" stroke-width="0.9" opacity=".7"/><rect x="2.5" y="4.6" width="6" height="1.9" fill="#fff"/></svg>
<div class="t lnk" style="left:57.5px;top:218.75px">Delete</div>
<div class="t r" style="left:-0.4000000000000057px;width:138.9px;top:219.64999999999998px">22</div>
<div class="t" style="left:152.6px;top:219.64999999999998px">1</div>
<div class="t r" style="left:166.5px;width:140.2px;top:219.64999999999998px">1</div>
<div class="t" style="left:320px;top:219.64999999999998px">Ryder BR-500</div>
<div class="t nul" style="left:392.2px;top:219.55px">NULL</div>
<div class="t" style="left:468px;top:219.64999999999998px">ryder-br-500</div>
<div class="t" style="left:543.2px;top:203.05px">&lt;ul&gt;<br>&lt;li&gt;Adjust to 5<br>Positions from a Low<br>Lying ...</div>
<div class="t" style="left:648.5px;top:219.64999999999998px">2052.jpg</div>
<div class="t r" style="left:681.6px;width:139.19999999999993px;top:219.64999999999998px">2599</div>
<div class="t r" style="left:809.4px;width:139.60000000000002px;top:219.64999999999998px">1099</div>
<div class="t nul" style="left:963.4px;top:219.55px">NULL</div>
<div class="t nul" style="left:1046px;top:219.55px">NULL</div>
<div class="t r" style="left:1042.2px;width:139.0px;top:219.64999999999998px">1</div>
<div class="t r" style="left:1132.5px;width:139.9000000000001px;top:219.64999999999998px">13</div>
<div class="t" style="left:1287px;width:62px;overflow:hidden;top:219.64999999999998px">79989778</div>
<div class="a" style="left:2px;top:248px;width:1347px;height:35px;background:#dfdfdf"></div>
<svg class="a" style="left:0.5px;top:261.0px" width="10" height="12" viewBox="0 0 10 12"><path d="M2.5 1.5v9.5H1" fill="none" stroke="#111" stroke-width="1.3"/><circle cx="3" cy="0.9" r="0.8" fill="#111"/><path d="M0 5.5h5" stroke="#6a5ae0" stroke-width="1.6"/><path d="M2.2 3.2v5.2" stroke="#6a5ae0" stroke-width="1.2"/><rect x="6.2" y="4" width="3.3" height="3.3" fill="#ffd200" stroke="#111" stroke-width="1.1"/><path d="M7.3 0.6h2.2" stroke="#6a5ae0" stroke-width="1"/></svg>
<div class="t lnk" style="left:14px;top:259.5px">Copy</div>
<svg class="a" style="left:44px;top:260.5px" width="11" height="11" viewBox="0 0 11 11"><circle cx="5.5" cy="5.5" r="5" fill="#e8553c"/><circle cx="5.5" cy="5.5" r="3.6" fill="none" stroke="#f6a08a" stroke-width="0.9" opacity=".7"/><rect x="2.5" y="4.6" width="6" height="1.9" fill="#fff"/></svg>
<div class="t lnk" style="left:57.5px;top:259.5px">Delete</div>
<div class="t r" style="left:-0.4000000000000057px;width:138.9px;top:260.4px">23</div>
<div class="t" style="left:152.6px;top:260.4px">3</div>
<div class="t r" style="left:166.5px;width:140.2px;top:260.4px">1</div>
<div class="t" style="left:320px;top:249.3px">Ryder CH-<br>10PC-Grey-<br>Medium</div>
<div class="t nul" style="left:392.2px;top:260.3px">NULL</div>
<div class="t" style="left:468px;top:254.8px">ryder-ch-10pc-<br>grey-medium</div>
<div class="t" style="left:543.2px;top:249.3px">&lt;ul&gt;<br>&lt;li&gt;High strength with<br>special aluminium al...</div>
<div class="t" style="left:648.5px;top:260.4px">6219.jpg</div>
<div class="t r" style="left:681.6px;width:139.19999999999993px;top:260.4px">2345</div>
<div class="t r" style="left:809.4px;width:139.60000000000002px;top:260.4px">2100</div>
<div class="t nul" style="left:963.4px;top:260.3px">NULL</div>
<div class="t nul" style="left:1046px;top:260.3px">NULL</div>
<div class="t r" style="left:1042.2px;width:139.0px;top:260.4px">1</div>
<div class="t r" style="left:1132.5px;width:139.9000000000001px;top:260.4px">12</div>
<div class="t" style="left:1287px;width:62px;overflow:hidden;top:260.4px">897616316461</div>
<div class="a" style="left:2px;top:283px;width:1347px;height:57px;background:#fff"></div>
<svg class="a" style="left:0.5px;top:307.0px" width="10" height="12" viewBox="0 0 10 12"><path d="M2.5 1.5v9.5H1" fill="none" stroke="#111" stroke-width="1.3"/><circle cx="3" cy="0.9" r="0.8" fill="#111"/><path d="M0 5.5h5" stroke="#6a5ae0" stroke-width="1.6"/><path d="M2.2 3.2v5.2" stroke="#6a5ae0" stroke-width="1.2"/><rect x="6.2" y="4" width="3.3" height="3.3" fill="#ffd200" stroke="#111" stroke-width="1.1"/><path d="M7.3 0.6h2.2" stroke="#6a5ae0" stroke-width="1"/></svg>
<div class="t lnk" style="left:14px;top:305.5px">Copy</div>
<svg class="a" style="left:44px;top:306.5px" width="11" height="11" viewBox="0 0 11 11"><circle cx="5.5" cy="5.5" r="5" fill="#e8553c"/><circle cx="5.5" cy="5.5" r="3.6" fill="none" stroke="#f6a08a" stroke-width="0.9" opacity=".7"/><rect x="2.5" y="4.6" width="6" height="1.9" fill="#fff"/></svg>
<div class="t lnk" style="left:57.5px;top:305.5px">Delete</div>
<div class="t r" style="left:-0.4000000000000057px;width:138.9px;top:306.4px">24</div>
<div class="t" style="left:152.6px;top:306.4px">5</div>
<div class="t r" style="left:166.5px;width:140.2px;top:306.4px">1</div>
<div class="t" style="left:320px;top:300.8px">Champion 200<br>Mag Diamond</div>
<div class="t nul" style="left:392.2px;top:306.3px">NULL</div>
<div class="t" style="left:468px;top:300.8px">champion-200-<br>mag-diamond</div>
<div class="t" style="left:543.2px;top:284.3px">&lt;ul&gt;<br>&lt;li&gt;BOTH<br>ELECTROMOTOR<br>CONTROLLED AND<br>ATTEND...</div>
<div class="t" style="left:648.5px;top:306.4px">2050.jpg</div>
<div class="t r" style="left:681.6px;width:139.19999999999993px;top:306.4px">95000</div>
<div class="t r" style="left:809.4px;width:139.60000000000002px;top:306.4px">58000</div>
<div class="t nul" style="left:963.4px;top:306.3px">NULL</div>
<div class="t nul" style="left:1046px;top:306.3px">NULL</div>
<div class="t r" style="left:1042.2px;width:139.0px;top:306.4px">1</div>
<div class="t r" style="left:1132.5px;width:139.9000000000001px;top:306.4px">18</div>
<div class="t" style="left:1287px;width:62px;overflow:hidden;top:306.4px">43131321654</div>
<div class="a" style="left:2px;top:340px;width:1347px;height:46px;background:#dfdfdf"></div>
<svg class="a" style="left:0.5px;top:358.5px" width="10" height="12" viewBox="0 0 10 12"><path d="M2.5 1.5v9.5H1" fill="none" stroke="#111" stroke-width="1.3"/><circle cx="3" cy="0.9" r="0.8" fill="#111"/><path d="M0 5.5h5" stroke="#6a5ae0" stroke-width="1.6"/><path d="M2.2 3.2v5.2" stroke="#6a5ae0" stroke-width="1.2"/><rect x="6.2" y="4" width="3.3" height="3.3" fill="#ffd200" stroke="#111" stroke-width="1.1"/><path d="M7.3 0.6h2.2" stroke="#6a5ae0" stroke-width="1"/></svg>
<div class="t lnk" style="left:14px;top:357.0px">Copy</div>
<svg class="a" style="left:44px;top:358.0px" width="11" height="11" viewBox="0 0 11 11"><circle cx="5.5" cy="5.5" r="5" fill="#e8553c"/><circle cx="5.5" cy="5.5" r="3.6" fill="none" stroke="#f6a08a" stroke-width="0.9" opacity=".7"/><rect x="2.5" y="4.6" width="6" height="1.9" fill="#fff"/></svg>
<div class="t lnk" style="left:57.5px;top:357.0px">Delete</div>
<div class="t r" style="left:-0.4000000000000057px;width:138.9px;top:357.9px">25</div>
<div class="t" style="left:152.6px;top:357.9px">2</div>
<div class="t r" style="left:166.5px;width:140.2px;top:357.9px">1</div>
<div class="t" style="left:320px;top:357.9px">Rainbow 2C</div>
<div class="t nul" style="left:392.2px;top:357.8px">NULL</div>
<div class="t" style="left:468px;top:357.9px">rainbow-2c</div>
<div class="t" style="left:543.2px;top:341.3px">&lt;ul&gt;<br>&lt;li&gt;It having 110 kg<br>seat weight capacity.<br>...</div>
<div class="t" style="left:648.5px;top:357.9px">2613.jpg</div>
<div class="t r" style="left:681.6px;width:139.19999999999993px;top:357.9px">3999</div>
<div class="t r" style="left:809.4px;width:139.60000000000002px;top:357.9px">1500</div>
<div class="t nul" style="left:963.4px;top:357.8px">NULL</div>
<div class="t nul" style="left:1046px;top:357.8px">NULL</div>
<div class="t r" style="left:1042.2px;width:139.0px;top:357.9px">1</div>
<div class="t r" style="left:1132.5px;width:139.9000000000001px;top:357.9px">12</div>
<div class="t" style="left:1287px;width:62px;overflow:hidden;top:357.9px">132131685445</div>
<div class="a" style="left:2px;top:386px;width:1347px;height:35px;background:#fff"></div>
<svg class="a" style="left:0.5px;top:399.0px" width="10" height="12" viewBox="0 0 10 12"><path d="M2.5 1.5v9.5H1" fill="none" stroke="#111" stroke-width="1.3"/><circle cx="3" cy="0.9" r="0.8" fill="#111"/><path d="M0 5.5h5" stroke="#6a5ae0" stroke-width="1.6"/><path d="M2.2 3.2v5.2" stroke="#6a5ae0" stroke-width="1.2"/><rect x="6.2" y="4" width="3.3" height="3.3" fill="#ffd200" stroke="#111" stroke-width="1.1"/><path d="M7.3 0.6h2.2" stroke="#6a5ae0" stroke-width="1"/></svg>
<div class="t lnk" style="left:14px;top:397.5px">Copy</div>
<svg class="a" style="left:44px;top:398.5px" width="11" height="11" viewBox="0 0 11 11"><circle cx="5.5" cy="5.5" r="5" fill="#e8553c"/><circle cx="5.5" cy="5.5" r="3.6" fill="none" stroke="#f6a08a" stroke-width="0.9" opacity=".7"/><rect x="2.5" y="4.6" width="6" height="1.9" fill="#fff"/></svg>
<div class="t lnk" style="left:57.5px;top:397.5px">Delete</div>
<div class="t r" style="left:-0.4000000000000057px;width:138.9px;top:398.4px">26</div>
<div class="t" style="left:152.6px;top:398.4px">4</div>
<div class="t r" style="left:166.5px;width:140.2px;top:398.4px">1</div>
<div class="t" style="left:320px;top:387.3px">VOIS-<br>communication<br>aid</div>
<div class="t nul" style="left:392.2px;top:398.3px">NULL</div>
<div class="t" style="left:468px;top:387.3px">vois-<br>communication-<br>aid</div>
<div class="t" style="left:543.2px;top:387.3px">&lt;p&gt;Product<br>&amp;ldquo;VOIS&amp;rdquo;<br>is a pair of gloves ...</div>
<div class="t" style="left:648.5px;top:398.4px">5711.png</div>
<div class="t r" style="left:681.6px;width:139.19999999999993px;top:398.4px">43750</div>
<div class="t r" style="left:809.4px;width:139.60000000000002px;top:398.4px">35500</div>
<div class="t nul" style="left:963.4px;top:398.3px">NULL</div>
<div class="t nul" style="left:1046px;top:398.3px">NULL</div>
<div class="t r" style="left:1042.2px;width:139.0px;top:398.4px">1</div>
<div class="t r" style="left:1132.5px;width:139.9000000000001px;top:398.4px">20</div>
<div class="t" style="left:1287px;width:62px;overflow:hidden;top:398.4px">12423436343</div>
<div class="a" style="left:2px;top:421px;width:1347px;height:35px;background:#dfdfdf"></div>
<svg class="a" style="left:0.5px;top:434.0px" width="10" height="12" viewBox="0 0 10 12"><path d="M2.5 1.5v9.5H1" fill="none" stroke="#111" stroke-width="1.3"/><circle cx="3" cy="0.9" r="0.8" fill="#111"/><path d="M0 5.5h5" stroke="#6a5ae0" stroke-width="1.6"/><path d="M2.2 3.2v5.2" stroke="#6a5ae0" stroke-width="1.2"/><rect x="6.2" y="4" width="3.3" height="3.3" fill="#ffd200" stroke="#111" stroke-width="1.1"/><path d="M7.3 0.6h2.2" stroke="#6a5ae0" stroke-width="1"/></svg>
<div class="t lnk" style="left:14px;top:432.5px">Copy</div>
<svg class="a" style="left:44px;top:433.5px" width="11" height="11" viewBox="0 0 11 11"><circle cx="5.5" cy="5.5" r="5" fill="#e8553c"/><circle cx="5.5" cy="5.5" r="3.6" fill="none" stroke="#f6a08a" stroke-width="0.9" opacity=".7"/><rect x="2.5" y="4.6" width="6" height="1.9" fill="#fff"/></svg>
<div class="t lnk" style="left:57.5px;top:432.5px">Delete</div>
<div class="t r" style="left:-0.4000000000000057px;width:138.9px;top:433.4px">27</div>
<div class="t" style="left:152.6px;top:433.4px">7</div>
<div class="t r" style="left:166.5px;width:140.2px;top:433.4px">1</div>
<div class="t" style="left:320px;top:433.4px">Test Chairs</div>
<div class="t nul" style="left:392.2px;top:433.29999999999995px">NULL</div>
<div class="t" style="left:468px;top:433.4px">test-chairs</div>
<div class="t" style="left:543.2px;top:422.29999999999995px">&lt;p&gt;Loreum ipsum<br>loreum ipsum loreum<br>ipsumLoreum ip...</div>
<div class="t" style="left:648.5px;top:433.4px">6100.jpg</div>
<div class="t r" style="left:681.6px;width:139.19999999999993px;top:433.4px">20000</div>
<div class="t r" style="left:809.4px;width:139.60000000000002px;top:433.4px">15000</div>
<div class="t nul" style="left:963.4px;top:433.29999999999995px">NULL</div>
<div class="t nul" style="left:1046px;top:433.29999999999995px">NULL</div>
<div class="t r" style="left:1042.2px;width:139.0px;top:433.4px">1</div>
<div class="t r" style="left:1132.5px;width:139.9000000000001px;top:433.4px">11</div>
<div class="t" style="left:1287px;width:62px;overflow:hidden;top:433.4px">648732648736</div>
<div class="a" style="left:2px;top:456px;width:1347px;height:20px;background:#fff"></div>
<svg class="a" style="left:0.5px;top:461.5px" width="10" height="12" viewBox="0 0 10 12"><path d="M2.5 1.5v9.5H1" fill="none" stroke="#111" stroke-width="1.3"/><circle cx="3" cy="0.9" r="0.8" fill="#111"/><path d="M0 5.5h5" stroke="#6a5ae0" stroke-width="1.6"/><path d="M2.2 3.2v5.2" stroke="#6a5ae0" stroke-width="1.2"/><rect x="6.2" y="4" width="3.3" height="3.3" fill="#ffd200" stroke="#111" stroke-width="1.1"/><path d="M7.3 0.6h2.2" stroke="#6a5ae0" stroke-width="1"/></svg>
<div class="t lnk" style="left:14px;top:460.0px">Copy</div>
<svg class="a" style="left:44px;top:461.0px" width="11" height="11" viewBox="0 0 11 11"><circle cx="5.5" cy="5.5" r="5" fill="#e8553c"/><circle cx="5.5" cy="5.5" r="3.6" fill="none" stroke="#f6a08a" stroke-width="0.9" opacity=".7"/><rect x="2.5" y="4.6" width="6" height="1.9" fill="#fff"/></svg>
<div class="t lnk" style="left:57.5px;top:460.0px">Delete</div>
<div class="t r" style="left:-0.4000000000000057px;width:138.9px;top:460.9px">28</div>
<div class="t" style="left:152.6px;top:460.9px">10</div>
<div class="t r" style="left:166.5px;width:140.2px;top:460.9px">1</div>
<div class="t" style="left:320px;top:460.9px">Test</div>
<div class="t nul" style="left:392.2px;top:460.79999999999995px">NULL</div>
<div class="t" style="left:543.2px;top:460.9px">&lt;p&gt;Test&lt;/p&gt;</div>
<div class="t" style="left:648.5px;top:460.9px">1097.png</div>
<div class="t r" style="left:681.6px;width:139.19999999999993px;top:460.9px">10000</div>
<div class="t r" style="left:809.4px;width:139.60000000000002px;top:460.9px">500</div>
<div class="t nul" style="left:963.4px;top:460.79999999999995px">NULL</div>
<div class="t nul" style="left:1046px;top:460.79999999999995px">NULL</div>
<div class="t r" style="left:1042.2px;width:139.0px;top:460.9px">1</div>
<div class="t r" style="left:1132.5px;width:139.9000000000001px;top:460.9px">20</div>
<div class="t" style="left:1287px;width:62px;overflow:hidden;top:460.9px">10</div>
<div class="a" style="left:2px;top:476px;width:1347px;height:20.600000000000023px;background:#dfdfdf"></div>
<svg class="a" style="left:0.5px;top:481.79999999999995px" width="10" height="12" viewBox="0 0 10 12"><path d="M2.5 1.5v9.5H1" fill="none" stroke="#111" stroke-width="1.3"/><circle cx="3" cy="0.9" r="0.8" fill="#111"/><path d="M0 5.5h5" stroke="#6a5ae0" stroke-width="1.6"/><path d="M2.2 3.2v5.2" stroke="#6a5ae0" stroke-width="1.2"/><rect x="6.2" y="4" width="3.3" height="3.3" fill="#ffd200" stroke="#111" stroke-width="1.1"/><path d="M7.3 0.6h2.2" stroke="#6a5ae0" stroke-width="1"/></svg>
<div class="t lnk" style="left:14px;top:480.29999999999995px">Copy</div>
<svg class="a" style="left:44px;top:481.29999999999995px" width="11" height="11" viewBox="0 0 11 11"><circle cx="5.5" cy="5.5" r="5" fill="#e8553c"/><circle cx="5.5" cy="5.5" r="3.6" fill="none" stroke="#f6a08a" stroke-width="0.9" opacity=".7"/><rect x="2.5" y="4.6" width="6" height="1.9" fill="#fff"/></svg>
<div class="t lnk" style="left:57.5px;top:480.29999999999995px">Delete</div>
<div class="t r" style="left:-0.4000000000000057px;width:138.9px;top:481.19999999999993px">29</div>
<div class="t" style="left:152.6px;top:481.19999999999993px">10</div>
<div class="t r" style="left:166.5px;width:140.2px;top:481.19999999999993px">1</div>
<div class="t" style="left:320px;top:481.19999999999993px">Test132</div>
<div class="t nul" style="left:392.2px;top:481.0999999999999px">NULL</div>
<div class="t" style="left:543.2px;top:481.19999999999993px">&lt;p&gt;Test data&lt;/p&gt;</div>
<div class="t" style="left:648.5px;top:481.19999999999993px">5000.png</div>
<div class="t r" style="left:681.6px;width:139.19999999999993px;top:481.19999999999993px">500</div>
<div class="t r" style="left:809.4px;width:139.60000000000002px;top:481.19999999999993px">400</div>
<div class="t nul" style="left:963.4px;top:481.0999999999999px">NULL</div>
<div class="t nul" style="left:1046px;top:481.0999999999999px">NULL</div>
<div class="t r" style="left:1042.2px;width:139.0px;top:481.19999999999993px">1</div>
<div class="t r" style="left:1132.5px;width:139.9000000000001px;top:481.19999999999993px">20</div>
<div class="t" style="left:1287px;width:62px;overflow:hidden;top:481.19999999999993px">555</div>
<div class="a" style="left:2px;top:496.6px;width:1347px;height:20.399999999999977px;background:#fff"></div>
<svg class="a" style="left:0.5px;top:502.29999999999995px" width="10" height="12" viewBox="0 0 10 12"><path d="M2.5 1.5v9.5H1" fill="none" stroke="#111" stroke-width="1.3"/><circle cx="3" cy="0.9" r="0.8" fill="#111"/><path d="M0 5.5h5" stroke="#6a5ae0" stroke-width="1.6"/><path d="M2.2 3.2v5.2" stroke="#6a5ae0" stroke-width="1.2"/><rect x="6.2" y="4" width="3.3" height="3.3" fill="#ffd200" stroke="#111" stroke-width="1.1"/><path d="M7.3 0.6h2.2" stroke="#6a5ae0" stroke-width="1"/></svg>
<div class="t lnk" style="left:14px;top:500.79999999999995px">Copy</div>
<svg class="a" style="left:44px;top:501.79999999999995px" width="11" height="11" viewBox="0 0 11 11"><circle cx="5.5" cy="5.5" r="5" fill="#e8553c"/><circle cx="5.5" cy="5.5" r="3.6" fill="none" stroke="#f6a08a" stroke-width="0.9" opacity=".7"/><rect x="2.5" y="4.6" width="6" height="1.9" fill="#fff"/></svg>
<div class="t lnk" style="left:57.5px;top:500.79999999999995px">Delete</div>
<div class="t r" style="left:-0.4000000000000057px;width:138.9px;top:501.69999999999993px">30</div>
<div class="t" style="left:152.6px;top:501.69999999999993px">1</div>
<div class="t r" style="left:166.5px;width:140.2px;top:501.69999999999993px">1</div>
<div class="t" style="left:320px;top:501.69999999999993px">aaa</div>
<div class="t nul" style="left:392.2px;top:501.5999999999999px">NULL</div>
<div class="t" style="left:543.2px;top:501.69999999999993px">&lt;p&gt;fjhhk&lt;/p&gt;</div>
<div class="t" style="left:648.5px;top:501.69999999999993px">5502.jpg</div>
<div class="t r" style="left:681.6px;width:139.19999999999993px;top:501.69999999999993px">423</div>
<div class="t r" style="left:809.4px;width:139.60000000000002px;top:501.69999999999993px">676</div>
<div class="t nul" style="left:963.4px;top:501.5999999999999px">NULL</div>
<div class="t nul" style="left:1046px;top:501.5999999999999px">NULL</div>
<div class="t r" style="left:1042.2px;width:139.0px;top:501.69999999999993px">1</div>
<div class="t r" style="left:1132.5px;width:139.9000000000001px;top:501.69999999999993px">43</div>
<div class="t" style="left:1287px;width:62px;overflow:hidden;top:501.69999999999993px">565776776</div>
<div class="t lnk" style="left:-1px;top:530.8px">heck all</div>
<div class="t" style="left:56px;top:530.8px;font-style:italic;color:#333">With selected:</div>
<svg class="a" style="left:128px;top:532px" width="13" height="13" viewBox="0 0 13 13"><path d="M1 12l.8-3.2L9.5 1.2l2.4 2.4-7.7 7.6z" fill="#f3b33d" stroke="#b8741c" stroke-width="0.9"/><path d="M1 12l.8-3.2 2.4 2.4z" fill="#6b4a20"/></svg>
<div class="t lnk" style="left:142.4px;top:530.8px">Edit</div>
<svg class="a" style="left:174px;top:532px" width="10" height="12" viewBox="0 0 10 12"><path d="M2.5 1.5v9.5H1" fill="none" stroke="#111" stroke-width="1.3"/><circle cx="3" cy="0.9" r="0.8" fill="#111"/><path d="M0 5.5h5" stroke="#6a5ae0" stroke-width="1.6"/><path d="M2.2 3.2v5.2" stroke="#6a5ae0" stroke-width="1.2"/><rect x="6.2" y="4" width="3.3" height="3.3" fill="#ffd200" stroke="#111" stroke-width="1.1"/><path d="M7.3 0.6h2.2" stroke="#6a5ae0" stroke-width="1"/></svg>
<div class="t lnk" style="left:189px;top:530.8px">Copy</div>
<svg class="a" style="left:227px;top:532.5px" width="11" height="11" viewBox="0 0 11 11"><circle cx="5.5" cy="5.5" r="5" fill="#e8553c"/><circle cx="5.5" cy="5.5" r="3.6" fill="none" stroke="#f6a08a" stroke-width="0.9" opacity=".7"/><rect x="2.5" y="4.6" width="6" height="1.9" fill="#fff"/></svg>
<div class="t lnk" style="left:242px;top:530.8px">Delete</div>
<svg class="a" style="left:286px;top:532px" width="12" height="12" viewBox="0 0 12 12"><rect x="0.5" y="0.5" width="11" height="10.5" fill="#e6eef8" stroke="#7d9cc8"/><path d="M0.5 3h11M2 5.5h8M2 7.5h8" stroke="#a8bede" stroke-width="0.8"/><path d="M1 9.3h10" stroke="#3a9a3a" stroke-width="1.6"/></svg>
<div class="t lnk" style="left:300.6px;top:530.8px">Export</div>
<div class="t lnk" style="left:-0.5px;top:573.5px">all</div>
<div class="a" style="left:19px;top:570.5px;width:1px;height:14px;background:#d9b98f"></div>
<div class="t" style="left:28.4px;top:573.5px;color:#333">Number of rows:</div>
<div class="a" style="left:108px;top:569.5px;width:44px;height:18px;border:1px solid #aaa;border-radius:2px;background:#fff"></div>
<div class="t" style="left:114px;top:573.5px;color:#000">25</div>
<svg class="a" style="left:137px;top:575.5px" width="10" height="7" viewBox="0 0 10 7"><path d="M1 1l4 4 4-4" fill="none" stroke="#111" stroke-width="1.8"/></svg>
<div class="t" style="left:177.2px;top:573.5px;color:#333">Filter rows:</div>
<div class="a" style="left:230px;top:569.5px;width:128.5px;height:18.5px;border:1px solid #aaa;border-radius:2px;background:#fff"></div>
<div class="t" style="left:234.5px;top:573.5px;color:#757575">Search this table</div>
<div class="t" style="left:363.8px;top:573.5px;color:#333">Sort by key:</div>
<div class="a" style="left:426px;top:569.5px;width:107.5px;height:18px;border:1px solid #aaa;border-radius:2px;background:#fff"></div>
<div class="t" style="left:432px;top:573.5px;color:#000">None</div>
<svg class="a" style="left:518px;top:575.5px" width="10" height="7" viewBox="0 0 10 7"><path d="M1 1l4 4 4-4" fill="none" stroke="#111" stroke-width="1.8"/></svg>
<div class="a" style="left:2px;top:589.5px;width:60px;height:13px;background:#d8d8d8;border:1px solid #bbb;border-bottom:none;border-radius:0 4px 0 0"></div>
<div class="a" style="left:9px;top:593px;width:8px;height:7px;background:#222;border-top:1px solid #fff"></div>
<div class="t" style="left:23px;top:590.5px;color:#444">Console</div>
<div class="a" style="left:0;top:18px;width:2px;height:584px;background:#aaa"></div>
</div>
<div class="a" style="left:1349px;top:109px;width:17px;height:602px;background:#f1f1f1"></div>
<div class="a" style="left:1351px;top:174px;width:13px;height:390px;background:#c1c1c1"></div>
<svg class="a" style="left:1353px;top:114px" width="9" height="6" viewBox="0 0 9 6"><path d="M0.5 5.5L4.5 1l4 4.5z" fill="#505050"/></svg>
<svg class="a" style="left:1353px;top:699px" width="9" height="6" viewBox="0 0 9 6"><path d="M0.5 0.5L4.5 5l4-4.5z" fill="#505050"/></svg>
<div class="a" style="left:0;top:711px;width:1349px;height:17px;background:#f1f1f1"></div>
<div class="a" style="left:54px;top:713px;width:707px;height:13px;background:#c1c1c1"></div>
<svg class="a" style="left:5px;top:715px" width="6" height="9" viewBox="0 0 6 9"><path d="M5.5 0.5L1 4.5l4.5 4z" fill="#505050"/></svg>
<svg class="a" style="left:1337px;top:715px" width="6" height="9" viewBox="0 0 6 9"><path d="M0.5 0.5L5 4.5l-4.5 4z" fill="#505050"/></svg>
<div class="a" style="left:1349px;top:711px;width:17px;height:17px;background:#dcdcdc"></div>
<div class="a" style="left:931px;top:71.5px;width:327px;height:48px;background:#fff;border-radius:6px;box-shadow:0 1px 3px rgba(0,0,0,.35)"></div>
<div class="a" style="left:947px;top:88px;font-size:11.6px;line-height:16px;color:#222">fx_shipping_address</div>
<div class="a" style="left:1111px;top:88px;font-size:11.6px;line-height:16px;color:#555">0/0</div>
<div class="a" style="left:1145px;top:80px;width:1px;height:31px;background:#d8d8d8"></div>
<svg class="a" style="left:1164px;top:91px" width="12" height="7" viewBox="0 0 12 7"><path d="M1 6l5-5 5 5" fill="none" stroke="#aaa" stroke-width="1.5"/></svg>
<svg class="a" style="left:1196px;top:92px" width="12" height="7" viewBox="0 0 12 7"><path d="M1 1l5 5 5-5" fill="none" stroke="#aaa" stroke-width="1.5"/></svg>
<svg class="a" style="left:1228px;top:89px" width="12" height="12" viewBox="0 0 12 12"><path d="M1.5 1.5l9 9M10.5 1.5l-9 9" stroke="#333" stroke-width="2"/></svg>
<div class="a" style="left:0;top:728px;width:1366px;height:40px;background:linear-gradient(90deg,#d1e4ee,#d3e1ee 50%,#d6dfee)"></div>
<div class="a" style="left:0;top:728px;width:48px;height:40px;background:#cfe5ee"></div>
<svg class="a" style="left:16px;top:740px" width="16" height="16" viewBox="0 0 16 16"><path d="M0 2.2l6.5-.9v6.2H0zM7.3 1.2L16 0v7.5H7.3zM0 8.3h6.5v6.3L0 13.8zM7.3 8.3H16V16l-8.7-1.2z" fill="#111"/></svg>
<div class="a" style="left:48.5px;top:728.5px;width:287px;height:39.5px;background:#fff;border:1px solid #c8d0d8"></div>
<svg class="a" style="left:59px;top:739px" width="18" height="18" viewBox="0 0 18 18"><circle cx="11" cy="7" r="5.5" fill="none" stroke="#111" stroke-width="1.4"/><path d="M7 11l-6 6" stroke="#111" stroke-width="1.6"/></svg>
<div class="a" style="left:88px;top:740px;font-size:14.4px;line-height:18px;color:#222">Type here to search</div>
<svg class="a" style="left:260px;top:728px" width="76" height="40" viewBox="0 0 76 40"><path d="M22 22l20 18M28 12l6 18 8 10M18 26l14 10M35 24l0 12" stroke="#7a9a50" stroke-width="1.4" fill="none"/><circle cx="35.5" cy="24" r="2.6" fill="#6a9a50"/><circle cx="19.5" cy="35.5" r="3" fill="#5a8a48"/><path d="M15 9.7L23.78 7.74L23.78 11.66z" fill="#8a80e0"/><path d="M15 9.7L23.59 12.39L21.62 15.79z" fill="#8a80e0"/><path d="M15 9.7L21.09 16.32L17.69 18.29z" fill="#8a80e0"/><path d="M15 9.7L16.96 18.48L13.04 18.48z" fill="#8a80e0"/><path d="M15 9.7L12.31 18.29L8.91 16.32z" fill="#8a80e0"/><path d="M15 9.7L8.38 15.79L6.41 12.39z" fill="#8a80e0"/><path d="M15 9.7L6.22 11.66L6.22 7.74z" fill="#8a80e0"/><path d="M15 9.7L6.41 7.01L8.38 3.61z" fill="#8a80e0"/><path d="M15 9.7L8.91 3.08L12.31 1.11z" fill="#8a80e0"/><path d="M15 9.7L13.04 0.92L16.96 0.92z" fill="#8a80e0"/><path d="M15 9.7L17.69 1.11L21.09 3.08z" fill="#8a80e0"/><path d="M15 9.7L21.62 3.61L23.59 7.01z" fill="#8a80e0"/><path d="M28 13.8L35.81 12.05L35.81 15.55z" fill="#8f86e6"/><path d="M28 13.8L35.63 16.19L33.89 19.22z" fill="#8f86e6"/><path d="M28 13.8L33.42 19.69L30.39 21.43z" fill="#8f86e6"/><path d="M28 13.8L29.75 21.61L26.25 21.61z" fill="#8f86e6"/><path d="M28 13.8L25.61 21.43L22.58 19.69z" fill="#8f86e6"/><path d="M28 13.8L22.11 19.22L20.37 16.19z" fill="#8f86e6"/><path d="M28 13.8L20.19 15.55L20.19 12.05z" fill="#8f86e6"/><path d="M28 13.8L20.37 11.41L22.11 8.38z" fill="#8f86e6"/><path d="M28 13.8L22.58 7.91L25.61 6.17z" fill="#8f86e6"/><path d="M28 13.8L26.25 5.99L29.75 5.99z" fill="#8f86e6"/><path d="M28 13.8L30.39 6.17L33.42 7.91z" fill="#8f86e6"/><path d="M28 13.8L33.89 8.38L35.63 11.41z" fill="#8f86e6"/><path d="M17 24L25.78 22.04L25.78 25.96z" fill="#8a80e0"/><path d="M17 24L25.59 26.69L23.62 30.09z" fill="#8a80e0"/><path d="M17 24L23.09 30.62L19.69 32.59z" fill="#8a80e0"/><path d="M17 24L18.96 32.78L15.04 32.78z" fill="#8a80e0"/><path d="M17 24L14.31 32.59L10.91 30.62z" fill="#8a80e0"/><path d="M17 24L10.38 30.09L8.41 26.69z" fill="#8a80e0"/><path d="M17 24L8.22 25.96L8.22 22.04z" fill="#8a80e0"/><path d="M17 24L8.41 21.31L10.38 17.91z" fill="#8a80e0"/><path d="M17 24L10.91 17.38L14.31 15.41z" fill="#8a80e0"/><path d="M17 24L15.04 15.22L18.96 15.22z" fill="#8a80e0"/><path d="M17 24L19.69 15.41L23.09 17.38z" fill="#8a80e0"/><path d="M17 24L23.62 17.91L25.59 21.31z" fill="#8a80e0"/><circle cx="15" cy="9.7" r="3.3" fill="#7068d0"/><circle cx="28" cy="13.8" r="3" fill="#7068d0"/><circle cx="17" cy="24" r="3.3" fill="#7068d0"/><ellipse cx="15.5" cy="9.7" rx="2.2" ry="1.6" fill="#f0a020"/><ellipse cx="28" cy="13.8" rx="2.2" ry="1.3" fill="#f0a020"/><ellipse cx="17" cy="24" rx="2.2" ry="1.8" fill="#f0a020"/><path d="M45 10l5-4 9-1 3 3-2 6-8 2-6-2z" fill="#3a9ae8"/><path d="M48 9l5-2 6 1-2 4-6 1z" fill="#8cc8f8"/><path d="M46 27l3-6 9-2 7 3 1 7-3 6-8 2-7-3z" fill="#3a8ae0"/><path d="M50 25l6-3 5 2-1 5-6 1z" fill="#a0d4fa"/><path d="M48 33l8 3 7-2-2 3-7 1z" fill="#7a70d8"/></svg>
<svg class="a" style="left:351px;top:739px" width="18" height="17" viewBox="0 0 18 17"><path d="M1 1.5h11.5M1 15.5h11.5M1.5 1v2.5M12 1v2.5M1.5 16v-2.5M12 16v-2.5" fill="none" stroke="#111" stroke-width="1.2"/><rect x="3.6" y="5" width="6.8" height="7" fill="none" stroke="#111" stroke-width="1.2"/><rect x="14" y="4" width="2.6" height="2.6" fill="#111"/><path d="M15.3 8v8.5" stroke="#111" stroke-width="1.2"/></svg>
<svg class="a" style="left:398px;top:735px" width="26" height="26" viewBox="0 0 26 26"><defs><linearGradient id="eg" x1="0" y1="0" x2="0" y2="1"><stop offset="0" stop-color="#2aa6e8"/><stop offset="1" stop-color="#0c62b8"/></linearGradient></defs><circle cx="13" cy="13" r="12" fill="url(#eg)"/><path d="M13 1a12 12 0 0 1 12 12c0 3-2.5 5-6 5-2.5 0-4.5-1.2-4.5-3 0-1 .8-1.6.8-2.8 0-2.8-3-5.2-7-5.2-3.5 0-6 2-7.3 4.5A12 12 0 0 1 13 1z" fill="#4cc46c"/><path d="M13 1a12 12 0 0 1 11.5 8.5C21 6 16 4.5 11 5.5 7 6.3 3.3 9 1.3 10.5A12 12 0 0 1 13 1z" fill="#2ea8e6"/><path d="M6 16c0 5 5 8.5 10 7.5-3-.5-6.5-3.5-6.5-7.5 0-2 1.3-3.3 3.3-3.3-3.5-.8-6.8 1-6.8 3.3z" fill="#0a4d96"/><ellipse cx="16.5" cy="14.5" rx="2.2" ry="1.8" fill="#d6e3ee"/></svg>
<svg class="a" style="left:447.5px;top:736px" width="25" height="24" viewBox="0 0 25 24"><path d="M0 8L12.5 0 25 8v15H0z" fill="#0f5ba7"/><path d="M0 8h25v15H0z" fill="#2aa0e8"/><path d="M2.5 8h20L12.5 14.5z" fill="#f4f6f8"/><path d="M0 8l12.5 8L25 8" fill="none" stroke="#1680d0" stroke-width="0.8"/></svg>
<svg class="a" style="left:497px;top:736px" width="24" height="24" viewBox="0 0 24 24"><path d="M17 1l6 3v16l-6 3L6 13l-4 3-2-1V9l2-1 4 3zM17 7l-6 5 6 5z" fill="#1f8ad2"/></svg>
<svg class="a" style="left:547px;top:738px" width="22" height="20" viewBox="0 0 22 20"><path d="M0 2h8l2 2h12v16H0z" fill="#e8a93a"/><path d="M0 6h22v14H0z" fill="#fbd06a"/><path d="M6 12h10v5h-3v-3H9v3H6z" fill="#2a7ad8"/></svg>
<div class="a" style="left:538px;top:765px;width:40px;height:3px;background:#0067c0"></div>
<div class="a" style="left:583px;top:728px;width:48px;height:40px;background:#e6eef5"></div>
<svg class="a" style="left:595px;top:736px" width="24" height="24" viewBox="0 0 24 24"><circle cx="12" cy="12" r="11.5" fill="#db4437"/><path d="M12 12L2 6.2A11.5 11.5 0 0 0 12 23.5z" fill="#0f9d58"/><path d="M12 12l10-5.8A11.5 11.5 0 0 1 12 23.5z" fill="#ffcd40"/><circle cx="12" cy="12" r="5.3" fill="#fff"/><circle cx="12" cy="12" r="4.2" fill="#4285f4"/></svg>
<div class="a" style="left:583px;top:765px;width:48px;height:3px;background:#0067c0"></div>
<div class="a" style="left:644px;top:736px;width:24px;height:24px;border-radius:3px;background:#3c3c3c"></div>
<svg class="a" style="left:649px;top:739px" width="14" height="18" viewBox="0 0 14 18"><path d="M1.5 6.5L12.5 3V6L1.5 9.5z" fill="#ff9800"/><path d="M1.5 9.5l11 3.5v-3L1.5 6.5z" fill="#e07a00"/><path d="M1.5 12l11-3.5v3L1.5 15z" fill="#ff9800"/></svg>
<div class="a" style="left:636px;top:765px;width:40px;height:3px;background:#0067c0"></div>
<svg class="a" style="left:693px;top:736px" width="24" height="24" viewBox="0 0 24 24"><rect x="0.5" y="0.5" width="23" height="23" rx="3" fill="#f47421" stroke="#d0581a" stroke-width="1"/><path d="M7.5 5.5c-3 0-4.5 2-4.5 3.8 0 1.3.8 2 1.5 2.7-.7.7-1.5 1.4-1.5 2.7 0 1.8 1.5 3.8 4.5 3.8 2 0 3-1.5 4.5-3 1.5 1.5 2.5 3 4.5 3 3 0 4.5-2 4.5-3.8 0-1.3-.8-2-1.5-2.7.7-.7 1.5-1.4 1.5-2.7 0-1.8-1.5-3.8-4.5-3.8-2 0-3 1.5-4.5 3-1.5-1.5-2.5-3-4.5-3z" fill="#fff"/><path d="M7.5 8.3c-1 0-1.7.6-1.7 1.4 0 .6.6 1.2 1.2 1.6h10c.6-.4 1.2-1 1.2-1.6 0-.8-.7-1.4-1.7-1.4-1 0-1.8 1-2.7 2h-3.6c-.9-1-1.7-2-2.7-2zM7 12.7c-.6.4-1.2 1-1.2 1.6 0 .8.7 1.4 1.7 1.4 1 0 1.8-1 2.7-2h3.6c.9 1 1.7 2 2.7 2 1 0 1.7-.6 1.7-1.4 0-.6-.6-1.2-1.2-1.6z" fill="#f47421"/></svg>
<div class="a" style="left:685px;top:765px;width:40px;height:3px;background:#0067c0"></div>
<svg class="a" style="left:915px;top:728px" width="40" height="40" viewBox="0 0 40 40"><circle cx="17.2" cy="21.9" r="7" fill="#f7941d"/><path d="M12 27a7 7 0 0 0 10 0z" fill="#f26a1b"/><path d="M9.5 16.5a3 3 0 0 1 3-3.2 4 4 0 0 1 7.5-1 3 3 0 0 1 2.2 4.4z" fill="#eaf2fb" stroke="#8ab8e8" stroke-width="0.9"/><path d="M19.5 28.5a3 3 0 0 1 3-3.2 4 4 0 0 1 7.5-1 3.2 3.2 0 0 1 3 4.5z" fill="#eaf2fb" stroke="#8ab8e8" stroke-width="0.9"/><circle cx="27.1" cy="13.8" r="5.7" fill="#e02a1e"/><path d="M26.3 11.3l1.6-1.1v7" fill="none" stroke="#fff" stroke-width="1.3"/></svg>
<div class="a" style="left:956px;top:740px;font-size:12.8px;line-height:18px;color:#111">30&#176;C</div>
<div class="a" style="left:994.5px;top:740px;font-size:13.36px;line-height:18px;color:#111">Partly sunny</div>
<svg class="a" style="left:1093px;top:743px" width="13" height="8" viewBox="0 0 13 8"><path d="M1 7l5.5-5.5L12 7" fill="none" stroke="#111" stroke-width="1.3"/></svg>
<svg class="a" style="left:1116px;top:739px" width="15" height="18" viewBox="0 0 15 18"><rect x="2" y="4.5" width="7.5" height="8" rx="1.5" fill="none" stroke="#111" stroke-width="1.1"/><path d="M9.5 7.5l3-1.5v6l-3-1.5" fill="none" stroke="#111" stroke-width="1.1"/><path d="M4 2.2a5 5 0 0 1 6 0M4 15.3a5 5 0 0 0 6 0" fill="none" stroke="#111" stroke-width="1"/></svg>
<svg class="a" style="left:1138px;top:741px" width="18" height="14" viewBox="0 0 18 14"><path d="M1.3 1v3M4 1v3" stroke="#111" stroke-width="1"/><path d="M0.5 3.5h4.5v2a2.2 2.2 0 0 1-4.5 0z" fill="none" stroke="#111" stroke-width="1"/><path d="M2.7 7.5v5" stroke="#111" stroke-width="1.1"/><rect x="4.5" y="3" width="11" height="8" fill="#111"/><rect x="5.5" y="4" width="9" height="6" fill="#111" stroke="#d6e0ee" stroke-width="0.6"/><rect x="15.5" y="5.2" width="1.6" height="3.6" fill="#111"/></svg>
<svg class="a" style="left:1166px;top:740px" width="14" height="14" viewBox="0 0 14 14"><path d="M1 13A12 12 0 0 1 13 1M4 13a9 9 0 0 1 9-9M7 13a6 6 0 0 1 6-6" fill="none" stroke="#111" stroke-width="1.2"/><circle cx="12" cy="12" r="1.5" fill="#111"/></svg>
<svg class="a" style="left:1186px;top:740px" width="17" height="15" viewBox="0 0 17 15"><path d="M1 5h3l4-4v13l-4-4H1z" fill="none" stroke="#111" stroke-width="1.2"/><path d="M10.5 5a3 3 0 0 1 0 5M12.5 3a6 6 0 0 1 0 9M14.5 1a9 9 0 0 1 0 13" fill="none" stroke="#111" stroke-width="1.1"/></svg>
<div class="a" style="left:1213px;top:740px;font-size:12.4px;line-height:18px;color:#111;transform:scaleX(0.86);transform-origin:0 0">ENG</div>
<div class="a" style="left:1254px;top:731px;font-size:12.4px;line-height:17px;color:#111;transform:scaleX(0.92);transform-origin:0 0">07:14 PM</div>
<div class="a" style="left:1249px;top:748.5px;font-size:12.4px;line-height:17px;color:#111;transform:scaleX(0.915);transform-origin:0 0">01-09-2023</div>
<svg class="a" style="left:1324px;top:737px" width="26" height="26" viewBox="0 0 26 26"><path d="M1 1h17v13H8l-4 4v-4H1z" fill="#111"/><path d="M4 5h11M4 8h11M4 11h8" stroke="#fff" stroke-width="1.3"/><circle cx="18" cy="18" r="7" fill="#d8d8d8" stroke="#888" stroke-width="1"/><text x="18" y="22" font-size="10" fill="#111" text-anchor="middle" font-family="Liberation Sans">1</text></svg>
</body></html>
